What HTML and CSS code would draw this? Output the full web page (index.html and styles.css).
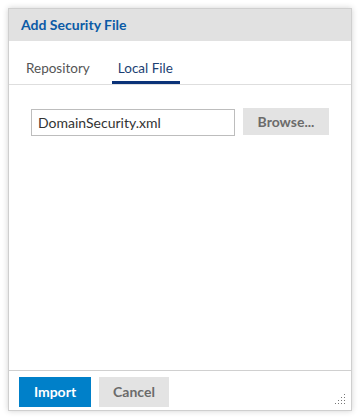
FILE: index.html
```html
<!DOCTYPE html>
<html>
<head>
<meta charset="utf-8">
<link rel="stylesheet" href="styles.css">
</head>
<body>
<div class="dialog">
  <div class="header">Add Security File</div>
  <div class="tabs">
    <div class="tab">Repository</div>
    <div class="tab active">Local File</div>
  </div>
  <div class="content">
    <div class="file-row">
      <div class="input">DomainSecurity.xml</div>
      <div class="btn btn-gray browse">Browse...</div>
    </div>
  </div>
  <div class="footer">
    <div class="btn btn-blue">Import</div>
    <div class="btn btn-gray cancel">Cancel</div>
    <svg class="grip" width="10" height="10" viewBox="0 0 10 10">
      <g fill="#777">
        <rect x="9" y="0" width="1" height="1"/>
        <rect x="6" y="3" width="1" height="1"/><rect x="9" y="3" width="1" height="1"/>
        <rect x="3" y="6" width="1" height="1"/><rect x="6" y="6" width="1" height="1"/><rect x="9" y="6" width="1" height="1"/>
        <rect x="0" y="9" width="1" height="1"/><rect x="3" y="9" width="1" height="1"/><rect x="6" y="9" width="1" height="1"/><rect x="9" y="9" width="1" height="1"/>
      </g>
    </svg>
  </div>
</div>
</body>
</html>
```

FILE: styles.css
```css
html, body {
  margin: 0;
  padding: 0;
  background: #fff;
}
body {
  padding: 8px;
  font-family: "Lato", "Noto Sans", sans-serif;
}
.dialog {
  width: 342px;
  height: 401px;
  border: 1px solid #cfcfcf;
  box-shadow: 0 0 6px rgba(0,0,0,0.18);
  display: flex;
  flex-direction: column;
  background: #fff;
}
.header {
  height: 32px;
  background: #e1e1e1;
  color: #0b5aa6;
  font-weight: 700;
  font-size: 14px;
  line-height: 32px;
  padding-left: 12px;
}
.tabs {
  height: 43px;
  border-bottom: 1px solid #dedede;
  display: flex;
  align-items: flex-end;
  padding-left: 11px;
  gap: 16px;
}
.tab {
  font-size: 13.5px;
  color: #555;
  padding: 0 6px;
  height: 29px;
  line-height: 26px;
  box-sizing: border-box;
}
.tab.active {
  color: #1c3f73;
  border-bottom: 3px solid #0a3278;
  padding: 0 7px 0 6px;
}
.content {
  flex: 1;
  padding: 23px 22px 0 22px;
}
.file-row {
  display: flex;
  align-items: flex-start;
  gap: 8px;
}
.input {
  height: 25px;
  border: 1px solid #bdbdbd;
  margin-top: 1px;
  font-size: 14px;
  color: #333;
  line-height: 25px;
  padding-left: 6px;
  width: 196px;
}
.btn {
  font-size: 14px;
  font-weight: 700;
  height: 30px;
  line-height: 30px;
  text-align: center;
}
.btn-gray {
  background: #e3e3e3;
  color: #6b6b6b;
}
.btn-blue {
  background: #0080c9;
  color: #fff;
  width: 72px;
}
.browse {
  width: 86px;
  height: 27px;
  line-height: 27px;
}
.cancel {
  width: 70px;
}
.footer {
  border-top: 1px solid #d0d0d0;
  display: flex;
  align-items: flex-start;
  padding: 6px 0 0 10px;
  gap: 8px;
  position: relative;
  box-sizing: border-box;
  height: 40px;
}
.grip {
  position: absolute;
  right: 6px;
  bottom: 6px;
}
```
